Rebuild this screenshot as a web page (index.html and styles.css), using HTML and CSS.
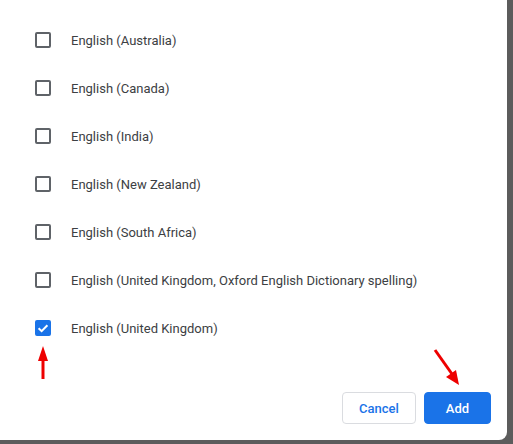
FILE: index.html
```html
<!DOCTYPE html>
<html>
<head>
<meta charset="utf-8">
<link rel="stylesheet" href="styles.css">
</head>
<body>
<div class="dialog">
  <div class="list">
    <div class="row"><span class="box"></span><span class="label">English (Australia)</span></div>
    <div class="row"><span class="box"></span><span class="label">English (Canada)</span></div>
    <div class="row"><span class="box"></span><span class="label">English (India)</span></div>
    <div class="row"><span class="box"></span><span class="label">English (New Zealand)</span></div>
    <div class="row"><span class="box"></span><span class="label">English (South Africa)</span></div>
    <div class="row"><span class="box"></span><span class="label">English (United Kingdom, Oxford English Dictionary spelling)</span></div>
    <div class="row"><span class="box checked"><svg viewBox="0 0 16 16" width="16" height="16"><path d="M3.6 8.2 L6.6 11.1 L12.4 5.2" fill="none" stroke="#fff" stroke-width="2"/></svg></span><span class="label">English (United Kingdom)</span></div>
  </div>
  <div class="footer">
    <button class="btn cancel">Cancel</button>
    <button class="btn add">Add</button>
  </div>
  <svg class="arrows" width="507" height="440" viewBox="0 0 507 440">
    <path d="M43 379 L43 358" stroke="#ee0000" stroke-width="3" fill="none"/>
    <path d="M38 361 L43 346 L48 361 Z" fill="#ee0000"/>
    <path d="M435 350 L452 374" stroke="#ee0000" stroke-width="3" fill="none"/>
    <path d="M446 377 L459 385 L456 370 Z" fill="#ee0000"/>
  </svg>
</div>
</body>
</html>
```
FILE: styles.css
```css
html, body {
  margin: 0;
  padding: 0;
}
body {
  background: #5c5c5c;
  width: 513px;
  height: 444px;
  overflow: hidden;
  font-family: Roboto, "Liberation Sans", Arial, sans-serif;
}
.dialog {
  position: relative;
  width: 507px;
  height: 440px;
  background: #fff;
  border-bottom-right-radius: 8px;
  display: flex;
  flex-direction: column;
}
.list {
  padding-top: 16px;
  display: flex;
  flex-direction: column;
}
.row {
  height: 48px;
  display: flex;
  align-items: center;
  padding-left: 35px;
}
.box {
  width: 16px;
  height: 16px;
  box-sizing: border-box;
  border: 2px solid #5f6368;
  border-radius: 2px;
  margin-right: 20px;
  flex: none;
  display: flex;
}
.box.checked {
  background: #1a73e8;
  border-color: #1a73e8;
}
.box.checked svg {
  margin: -2px;
}
.label {
  font-size: 13px;
  color: #3c4043;
}
.footer {
  margin-top: 40px;
  display: flex;
  justify-content: flex-end;
  gap: 8px;
  padding-right: 16px;
}
.btn {
  height: 32px;
  border-radius: 4px;
  font-family: Roboto, "Liberation Sans", Arial, sans-serif;
  font-size: 13px;
  font-weight: 500;
  box-sizing: border-box;
}
.cancel {
  width: 74px;
  background: #fff;
  border: 1px solid #dadce0;
  color: #1a73e8;
}
.add {
  width: 67px;
  background: #1a73e8;
  border: 1px solid #1a73e8;
  color: #fff;
}
.arrows {
  position: absolute;
  left: 0;
  top: 0;
  pointer-events: none;
}
```
